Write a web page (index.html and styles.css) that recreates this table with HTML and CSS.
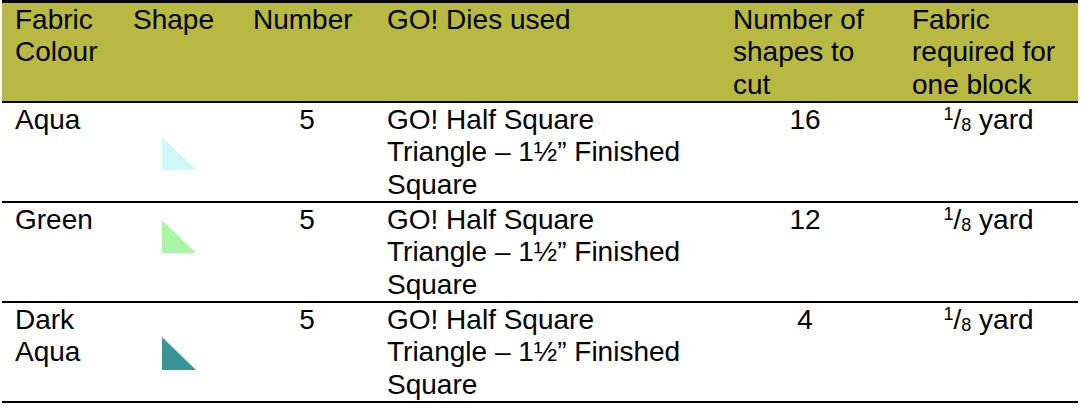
FILE: index.html
```html
<!DOCTYPE html>
<html>
<head>
<meta charset="utf-8">
<link rel="stylesheet" href="styles.css">
</head>
<body>
<table class="fabric-table">
  <colgroup>
    <col class="c-colour">
    <col class="c-shape">
    <col class="c-number">
    <col class="c-dies">
    <col class="c-count">
    <col class="c-fabric">
  </colgroup>
  <thead>
    <tr class="head-row">
      <th>Fabric Colour</th>
      <th>Shape</th>
      <th>Number</th>
      <th class="dies">GO! Dies used</th>
      <th>Number of shapes to cut</th>
      <th>Fabric required for one block</th>
    </tr>
  </thead>
  <tbody>
    <tr>
      <td>Aqua</td>
      <td><svg class="tri tri-low" viewBox="0 0 34 33"><polygon points="0,0 0,33 34,33" fill="#cef8f8"/></svg></td>
      <td class="num">5</td>
      <td class="dies">GO! Half Square Triangle – 1½” Finished Square</td>
      <td class="num count">16</td>
      <td class="num"><sup>1</sup>/<sub>8</sub> yard</td>
    </tr>
    <tr>
      <td>Green</td>
      <td><svg class="tri tri-high" viewBox="0 0 34 33"><polygon points="0,0 0,33 34,33" fill="#abf6a4"/></svg></td>
      <td class="num">5</td>
      <td class="dies">GO! Half Square Triangle – 1½” Finished Square</td>
      <td class="num count">12</td>
      <td class="num"><sup>1</sup>/<sub>8</sub> yard</td>
    </tr>
    <tr>
      <td>Dark Aqua</td>
      <td><svg class="tri tri-low" viewBox="0 0 34 33"><polygon points="0,0 0,33 34,33" fill="#389595"/></svg></td>
      <td class="num">5</td>
      <td class="dies">GO! Half Square Triangle – 1½” Finished Square</td>
      <td class="num count">4</td>
      <td class="num"><sup>1</sup>/<sub>8</sub> yard</td>
    </tr>
  </tbody>
</table>
</body>
</html>
```

FILE: styles.css
```css
html, body {
  margin: 0;
  padding: 0;
  background: #ffffff;
}

.fabric-table {
  margin-left: 2px;
  width: 1076px;
  table-layout: fixed;
  border-collapse: collapse;
  font-family: "Liberation Sans", Arial, sans-serif;
  font-size: 28px;
  line-height: 32.33px;
  color: #000000;
  border-top: 3px solid #000000;
}

.c-colour { width: 118px; }
.c-shape { width: 120px; }
.c-number { width: 134px; }
.c-dies { width: 346px; }
.c-count { width: 179px; }
.c-fabric { width: 179px; }

.fabric-table th,
.fabric-table td {
  vertical-align: top;
  text-align: left;
  font-weight: normal;
  padding: 1px 10px 0 13px;
  height: 97px;
  box-sizing: content-box;
}

.fabric-table tr {
  border-bottom: 2px solid #000000;
}

.head-row {
  background: #b7b942;
}

.fabric-table .dies {
  padding-right: 28px;
}

.fabric-table td.num {
  text-align: center;
  padding-left: 13px;
  padding-right: 13px;
}

.fabric-table td.count {
  padding-right: 22px;
}

.tri {
  display: block;
  width: 34px;
  height: 33px;
  margin-left: 29px;
}

.tri-low { margin-top: 33px; }
.tri-high { margin-top: 16px; }

sup, sub {
  font-size: 18px;
  line-height: 0;
}

sup { vertical-align: 9px; }
sub { vertical-align: -2px; }
```
